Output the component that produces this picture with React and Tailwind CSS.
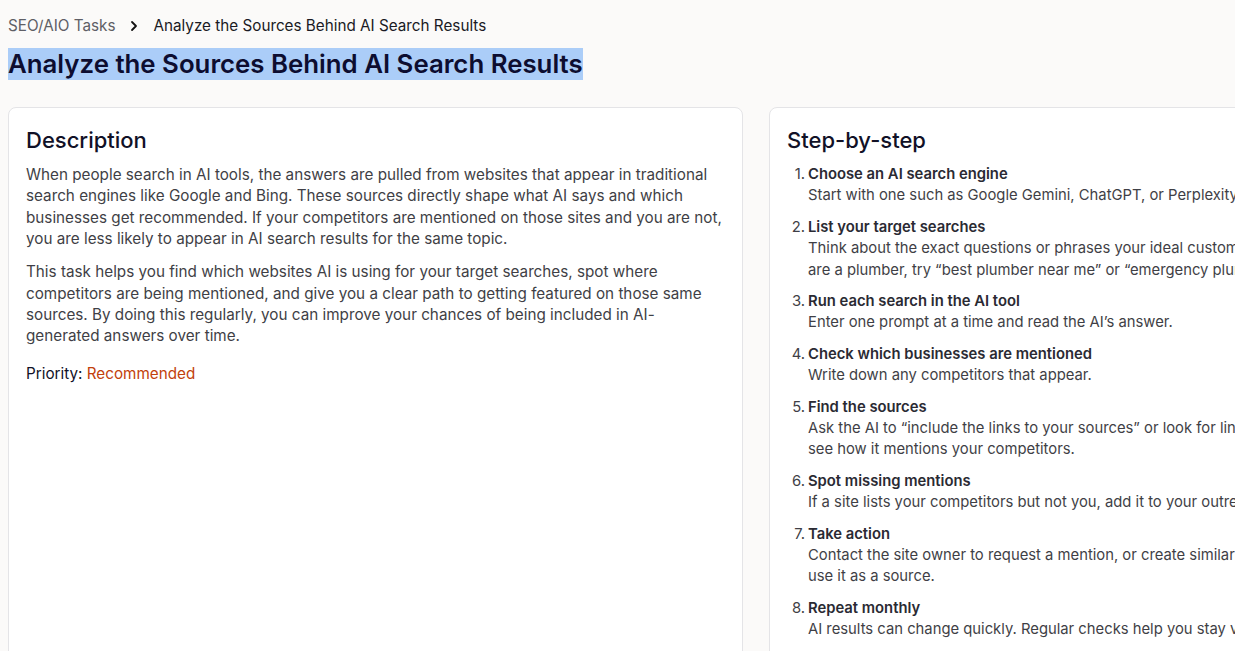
const STEPS = [
  { title: 'Choose an AI search engine', lines: ['Start with one such as Google Gemini, ChatGPT, or Perplexity.'] },
  {
    title: 'List your target searches',
    lines: [
      'Think about the exact questions or phrases your ideal customers would type in. For example, if you',
      'are a plumber, try “best plumber near me” or “emergency plumber in [your city].”',
    ],
  },
  { title: 'Run each search in the AI tool', lines: ['Enter one prompt at a time and read the AI’s answer.'] },
  { title: 'Check which businesses are mentioned', lines: ['Write down any competitors that appear.'] },
  {
    title: 'Find the sources',
    lines: [
      'Ask the AI to “include the links to your sources” or look for links in the answer. Visit each site to',
      'see how it mentions your competitors.',
    ],
  },
  { title: 'Spot missing mentions', lines: ['If a site lists your competitors but not you, add it to your outreach list.'] },
  {
    title: 'Take action',
    lines: [
      'Contact the site owner to request a mention, or create similar content on your own site so AI can',
      'use it as a source.',
    ],
  },
  { title: 'Repeat monthly', lines: ['AI results can change quickly. Regular checks help you stay visible over time.'] },
];

function Card({ title, children }) {
  return (
    <div className="w-[735px] shrink-0 rounded-lg border border-[#e4e4e7] bg-white px-[17px] pt-[18px] pb-6">
      <h2 className="text-[22px] leading-[28px] font-medium text-[#111127] mb-[10px]">{title}</h2>
      {children}
    </div>
  );
}

export default function App() {
  return (
    <div
      className="w-[1235px] h-[651px] overflow-hidden bg-[#fbfaf9] px-2 text-[#3f3f46]"
      style={{ fontFamily: 'Inter, "Noto Sans", sans-serif' }}
    >
      <nav className="flex items-center pt-[15px] h-[37px] text-[15.25px] leading-[22px]">
        <span className="text-[#5f5f66]">SEO/AIO Tasks</span>
        <svg className="mx-[13px] w-[12px] h-[12px]" viewBox="0 0 12 12" fill="none">
          <path d="M4 2l4 4-4 4" stroke="#111" strokeWidth="1.8" strokeLinecap="round" strokeLinejoin="round" />
        </svg>
        <span className="text-[#1a1a24]">Analyze the Sources Behind AI Search Results</span>
      </nav>

      <h1 className="mt-[10px] text-[25.8px] leading-[34px] font-semibold text-[#0d0d30]">
        <span className="bg-[#abcdf8] pb-px">Analyze the Sources Behind AI Search Results</span>
      </h1>

      <div className="mt-[26px] flex gap-[26px] h-[600px] items-stretch">
        <Card title="Description">
          <div className="text-[15.25px] leading-[21.33px]">
            <p>
              When people search in AI tools, the answers are pulled from websites that appear in traditional search
              engines like Google and Bing. These sources directly shape what AI says and which businesses get
              recommended. If your competitors are mentioned on those sites and you are not, you are less likely to
              appear in AI search results for the same topic.
            </p>
            <p className="mt-3">
              This task helps you find which websites AI is using for your target searches, spot where competitors
              are being mentioned, and give you a clear path to getting featured on those same sources. By doing this
              regularly, you can improve your chances of being included in AI-generated answers over time.
            </p>
            <p className="mt-4 text-[#111127]">
              Priority: <span className="text-[#c2410c]">Recommended</span>
            </p>
          </div>
        </Card>

        <Card title="Step-by-step">
          <ol className="mt-px text-[14.8px] leading-[21.33px] flex flex-col gap-[10.2px]">
            {STEPS.map((s, i) => (
              <li key={s.title} className="flex">
                <span className="w-[21px] shrink-0 text-right pr-[3px]">{i + 1}.</span>
                <div className="whitespace-nowrap">
                  <div className="font-semibold text-[#2a2a33]">{s.title}</div>
                  {s.lines.map(l => (
                    <div key={l}>{l}</div>
                  ))}
                </div>
              </li>
            ))}
          </ol>
        </Card>
      </div>
    </div>
  );
}
